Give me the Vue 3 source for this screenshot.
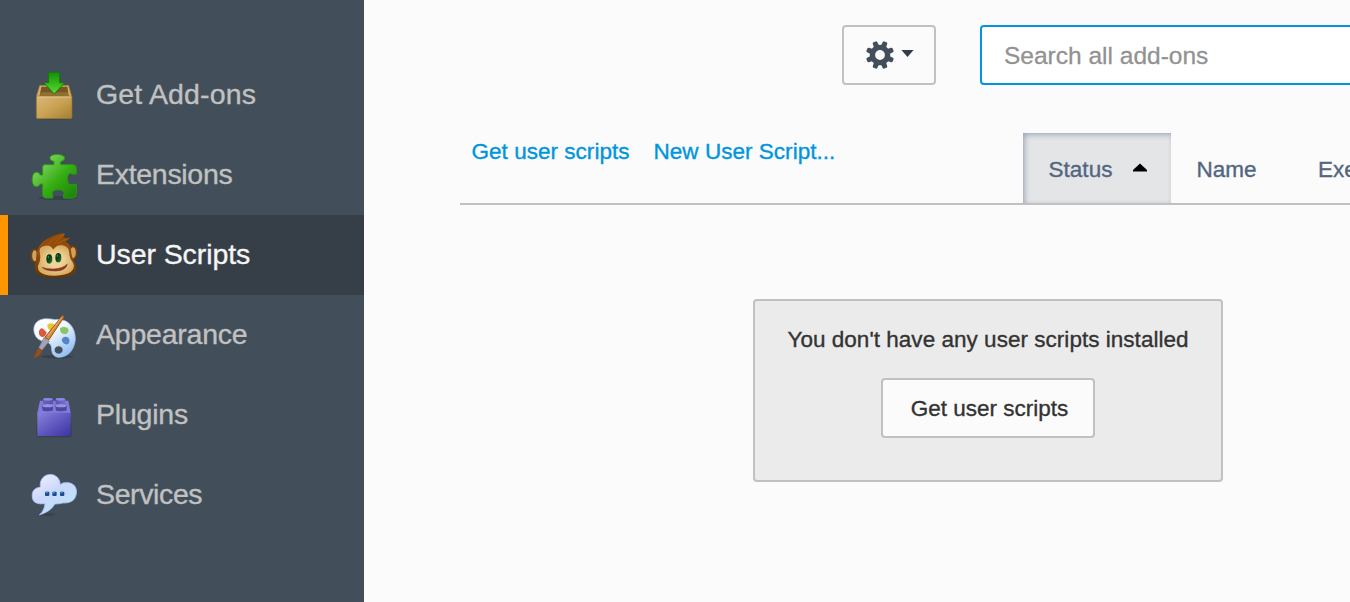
<script setup>
const items = [
  { id: 'get', label: 'Get Add-ons' },
  { id: 'extensions', label: 'Extensions' },
  { id: 'scripts', label: 'User Scripts', active: true },
  { id: 'appearance', label: 'Appearance' },
  { id: 'plugins', label: 'Plugins' },
  { id: 'services', label: 'Services' },
]
const teeth = [22.5, 67.5, 112.5, 157.5, 202.5, 247.5, 292.5, 337.5]
</script>

<template>
  <div class="window">
    <nav class="sidebar">
      <div v-for="item in items" :key="item.id" class="category" :class="[item.id, { active: item.active }]">
        <svg v-if="item.id === 'get'" class="icon" viewBox="0 0 180 180">
          <defs>
            <linearGradient id="box" x1="0" y1="0" x2="1" y2="1"><stop offset="0" stop-color="#d9b877" /><stop offset=".5" stop-color="#c9a253" /><stop offset="1" stop-color="#a67d30" /></linearGradient>
            <linearGradient id="arrow" x1="0" y1="0" x2="0" y2="1"><stop offset="0" stop-color="#178f0b" /><stop offset=".55" stop-color="#36bd18" /><stop offset="1" stop-color="#6ed245" /></linearGradient>
          </defs>
          <ellipse cx="91" cy="160" rx="56" ry="5" fill="#242c32" opacity=".4" />
          <path d="M47 61H134L143 94H37Z" fill="#d4ae65" stroke="#94712f" stroke-width="2" />
          <path d="M52 65H130L134 92H47Z" fill="#755725" />
          <path d="M52 82H131L134 94H46Z" fill="#91702f" />
          <rect x="37" y="94" width="107" height="67" rx="4" fill="url(#box)" stroke="#92702f" stroke-width="2" />
          <path d="M39 96H142" stroke="#e6cd96" stroke-width="3" />
          <path d="M74 22H107V53H122L91 87L59 53H74Z" fill="url(#arrow)" stroke="#127c0a" stroke-width="3" stroke-linejoin="round" />
        </svg>

        <svg v-else-if="item.id === 'extensions'" class="icon" viewBox="0 0 180 180">
          <defs><linearGradient id="puzzle" x1="0" y1="0" x2="1" y2="1"><stop offset="0" stop-color="#a8df7d" /><stop offset=".28" stop-color="#6dc94d" /><stop offset=".58" stop-color="#35ad12" /><stop offset="1" stop-color="#198007" /></linearGradient></defs>
          <ellipse cx="100" cy="159" rx="57" ry="6" fill="#252e33" opacity=".4" />
          <path d="M62 59H90V49Q77 47 78 38C78 25 122 25 122 39Q122 47 110 50V59H146Q157 59 157 70V87H145C125 75 125 126 145 118H157V146Q156 158 146 159H119V149C130 129 75 129 86 150V159H65Q56 158 56 149V117H49Q45 126 35 125C21 122 21 85 35 82Q44 79 49 90H56V66Q56 60 62 59Z" fill="url(#puzzle)" stroke="#289d13" stroke-width="3" stroke-linejoin="round" />
        </svg>

        <svg v-else-if="item.id === 'scripts'" class="icon" viewBox="0 0 180 180">
          <defs>
            <linearGradient id="hair" x1="0" y1="0" x2="0" y2="1"><stop stop-color="#8f4908" /><stop offset=".45" stop-color="#974e0b" /><stop offset="1" stop-color="#623400" /></linearGradient>
            <radialGradient id="face"><stop offset=".4" stop-color="#efd497" /><stop offset="1" stop-color="#d7ae67" /></radialGradient>
            <linearGradient id="eye" x1="0" y1="0" x2="1" y2="1"><stop stop-color="#06200b" /><stop offset=".5" stop-color="#07461c" /><stop offset="1" stop-color="#3a7a3c" /></linearGradient>
          </defs>
          <ellipse cx="32" cy="92" rx="10" ry="19" fill="#d0a25d" stroke="#70400c" stroke-width="5" />
          <ellipse cx="147" cy="83" rx="11" ry="19" fill="#d0a25d" stroke="#70400c" stroke-width="5" />
          <path d="M36 109C35 63 53 46 89 32Q114 23 121 24L118 37Q130 41 137 39L125 51Q142 55 142 83C145 106 157 112 156 132C153 151 129 159 92 159C53 159 34 149 33 130Q32 119 36 109Z" fill="url(#hair)" />
          <path d="M47 81Q45 66 61 63Q78 57 88 74Q98 58 115 61Q138 65 136 90Q138 103 147 113Q155 130 140 141Q125 151 94 152Q61 153 48 141Q38 131 44 118Q52 103 47 81Z" fill="url(#face)" />
          <path d="M72 57Q97 33 122 28Q99 43 89 58M100 56Q117 45 137 39" fill="none" stroke="#bd6d18" stroke-width="3" opacity=".5" />
          <ellipse cx="76" cy="102" rx="9" ry="14" fill="url(#eye)" /><ellipse cx="103" cy="98" rx="9" ry="14" fill="url(#eye)" />
          <ellipse cx="73" cy="96" rx="2" ry="4" fill="#48815d" /><ellipse cx="100" cy="92" rx="2" ry="4" fill="#48815d" />
          <path d="M54 127Q66 133 90 132Q118 130 130 117Q127 137 95 138Q62 138 54 127Z" fill="#8a3a24" stroke="#7a2a1a" stroke-width="1.5" />
        </svg>

        <svg v-else-if="item.id === 'appearance'" class="icon" viewBox="0 0 180 180">
          <defs>
            <linearGradient id="palette" x1="0" y1="0" x2=".7" y2="1"><stop stop-color="#fff" /><stop offset=".45" stop-color="#f2f8ff" /><stop offset="1" stop-color="#91bdf5" /></linearGradient>
            <filter id="paint"><feGaussianBlur stdDeviation="1.6" /></filter>
          </defs>
          <ellipse cx="100" cy="155" rx="48" ry="6" fill="#252e35" opacity=".4" />
          <path fill-rule="evenodd" d="M31 85C25 61 37 43 64 41Q82 41 93 44C134 39 154 68 154 103C151 137 130 158 102 157Q85 155 83 135Q84 113 64 110Q39 108 31 85ZM91 135A13 12 0 1 0 117 135A13 12 0 1 0 91 135Z" fill="url(#palette)" stroke="#a8caef" stroke-width="2" />
          <g filter="url(#paint)">
            <path d="M45 78Q50 65 58 72L68 82Q65 98 53 96Q43 92 45 78Z" fill="#dc5a3a" />
            <path d="M70 59Q79 51 90 57Q99 71 84 77Q69 74 70 59Z" fill="#eac726" />
            <path d="M108 70L118 65L130 68Q138 77 128 86Q115 90 109 80Z" fill="#85c765" />
            <path d="M113 105Q118 92 131 97Q141 104 133 117Q119 122 113 105Z" fill="#5285c8" />
          </g>
          <path d="M116 31L120 36L75 104L62 98Z" fill="#d78a39" stroke="#97551d" stroke-width="3" />
          <path d="M113 37L73 92" stroke="#f4b36b" stroke-width="3" />
          <path d="M60 98L76 108L54 136L44 129Z" fill="#a8a1b2" stroke="#77798d" stroke-width="2" />
          <path d="M44 129L55 137Q48 157 25 160Q34 153 36 142Q38 133 44 129Z" fill="#91511e" stroke="#6f3f1b" stroke-width="1" />
        </svg>

        <svg v-else-if="item.id === 'plugins'" class="icon" viewBox="0 0 180 180">
          <defs>
            <linearGradient id="brick" x1="0" y1="0" x2="1" y2="1"><stop stop-color="#8882db" /><stop offset=".55" stop-color="#5d55bd" /><stop offset="1" stop-color="#3e32a0" /></linearGradient>
            <linearGradient id="stud"><stop stop-color="#6864b2" /><stop offset=".5" stop-color="#5750a7" /><stop offset="1" stop-color="#7770cc" /></linearGradient>
          </defs>
          <path d="M37 115H143V151Q142 158 130 157H47Q36 156 37 145Z" fill="#252d35" opacity=".4" />
          <path d="M48 47H133L140 84H40Z" fill="#817be0" />
          <path d="M57 42Q57 39 72 39Q87 39 87 43V57H57ZM95 43Q95 39 109 39Q124 39 124 43V57H95Z" fill="url(#stud)" />
          <ellipse cx="72" cy="43" rx="14" ry="4" fill="#8d87e5" /><ellipse cx="109" cy="43" rx="14" ry="4" fill="#8d87e5" />
          <path d="M54 63Q55 57 70 57Q87 57 87 63V76Q79 81 56 77ZM94 63Q95 57 111 57Q128 57 128 63V76Q119 81 96 77Z" fill="#504798" />
          <ellipse cx="71" cy="62" rx="16" ry="5" fill="#9691ed" /><ellipse cx="111" cy="62" rx="16" ry="5" fill="#9691ed" />
          <rect x="40" y="83" width="100" height="70" rx="2" fill="url(#brick)" />
        </svg>

        <svg v-else class="icon" viewBox="0 0 180 180">
          <defs>
            <linearGradient id="cloud" x1="0" y1="0" x2=".65" y2="1"><stop stop-color="#f4f3ff" /><stop offset=".5" stop-color="#cbd7fb" /><stop offset="1" stop-color="#b9e6f8" /></linearGradient>
          </defs>
          <ellipse cx="68" cy="149" rx="25" ry="5" fill="#252d34" opacity=".35" />
          <path d="M49 66C43 20 106 14 109 59Q115 51 133 53C156 55 165 80 151 102Q141 115 116 114Q107 117 93 117Q80 140 46 150Q61 137 63 116Q28 120 25 99Q20 70 49 66Z" fill="url(#cloud)" stroke="#a9bcf5" stroke-width="2.5" />
          <g fill="#164c90"><rect x="63" y="80" width="13" height="13" rx="3" /><rect x="85" y="80" width="13" height="13" rx="3" /><rect x="108" y="80" width="13" height="13" rx="3" /></g>
          <g fill="#4d94cb"><rect x="65" y="80" width="6" height="5" /><rect x="87" y="80" width="6" height="5" /><rect x="110" y="80" width="6" height="5" /></g>
        </svg>
        <span>{{ item.label }}</span>
      </div>
    </nav>

    <main class="content">
      <header class="toolbar">
        <button class="tools" aria-label="Tools">
          <svg class="gear" viewBox="-15 -15 30 30">
            <path v-for="angle in teeth" :key="angle" :transform="`rotate(${angle})`" d="M-2.8-8L-2.4-13Q-2.2-14.2-1.2-14.2H1.2Q2.2-14.2 2.4-13L2.8-8Z" fill="#424f5a" />
            <circle r="7.6" fill="none" stroke="#424f5a" stroke-width="5.4" />
          </svg>
          <svg class="down" viewBox="0 0 14 8"><path d="M0 0H14L7 8Z" fill="#333b4c" /></svg>
        </button>
        <input class="search" type="text" placeholder="Search all add-ons">
      </header>
      <div class="subbar">
        <a class="get-link">Get user scripts</a>
        <a class="new-link">New User Script...</a>
        <div class="status"><span>Status</span><svg viewBox="0 0 16 9"><path d="M1 8.5V7L8 .5L15 7V8.5Z" fill="#000" /></svg></div>
        <div class="name">Name</div>
        <div class="execution">Execution Order</div>
      </div>
      <section class="empty">
        <p>You don't have any user scripts installed</p>
        <button class="install"><span>Get user scripts</span></button>
      </section>
    </main>
  </div>
</template>

<style>
body { margin: 0; overflow: hidden; }
</style>
<style scoped>
* { box-sizing: border-box; }
.window { display: flex; width: 1350px; height: 602px; overflow: hidden; background: #fbfbfb; font-family: "Liberation Sans", Arial, sans-serif; }
.sidebar { flex: 0 0 364px; padding-top: 55px; background: #424f5a; }
.category { display: flex; align-items: center; height: 80px; border-left: 8px solid transparent; padding-left: 16px; color: #c1c1c1; font-size: 28.5px; letter-spacing: -.22px; }
.category.active { background: #363f48; border-color: #ff9500; color: #f5f5f5; }
.category.get { letter-spacing: .15px; }
.category.extensions { letter-spacing: -.3px; }
.category.scripts { letter-spacing: -.08px; }
.category.services { letter-spacing: -.38px; }
.category span { margin: -2px 0 0 12px; line-height: 34px; white-space: nowrap; -webkit-text-stroke: .35px; }
.icon { flex: none; width: 60px; height: 60px; margin-top: -1px; filter: blur(.5px); }
.content { flex: none; width: 986px; overflow: hidden; }
.toolbar { display: flex; height: 133px; padding: 25px 0 0 478px; }
button { display: flex; align-items: center; justify-content: center; border: 2px solid #c1c1c1; border-radius: 4px; background: #fbfbfb; font-family: inherit; padding: 0; }
.tools { flex: none; width: 94px; height: 60px; }
.gear { width: 30px; height: 30px; }
.down { width: 13px; height: 7px; margin: -3px 0 0 6px; }
.search { flex: none; width: 440px; height: 60px; margin-left: 44px; padding: 2px 22px 0; border: 2px solid #0095dd; border-radius: 4px; background: #fff; font: 24.5px "Liberation Sans", Arial, sans-serif; }
.search::placeholder { color: #929292; opacity: 1; -webkit-text-stroke: .3px; }
.subbar { display: flex; width: 1100px; height: 72px; margin-left: 96px; border-bottom: 2px solid #c1c1c1; font-size: 22.5px; line-height: 37px; letter-spacing: .03px; white-space: nowrap; -webkit-text-stroke: .35px; }
.get-link { flex: none; width: 182px; margin-left: 11.5px; color: #0095dd; }
.new-link { flex: none; width: 369.5px; color: #0095dd; }
.status { display: flex; align-items: center; flex: none; width: 148px; height: 70px; padding-left: 25.5px; background: #e4e5e7; box-shadow: inset 2px 2px 6px -1px #8e9cb2; color: #536680; }
.status span { padding-top: 2px; }
.status svg { width: 16px; height: 9px; margin: -1px 0 0 20px; }
.name, .execution { flex: none; line-height: 73px; color: #536680; }
.name { width: 121px; padding-left: 25.5px; }
.execution { padding-left: 26px; }
.empty { display: flex; flex-direction: column; align-items: center; width: 470px; height: 183px; margin: 94px 0 0 389px; border: 2px solid #c1c1c1; border-radius: 4px; background: #ebebeb; color: #333; font-size: 22.5px; letter-spacing: .03px; }
.empty p { margin: 24px 0 23px; line-height: 30px; white-space: nowrap; -webkit-text-stroke: .35px; }
.install { width: 214px; height: 60px; color: #333; font-size: 22.5px; -webkit-text-stroke: .35px; }
.install span { padding: 1px 0 0 3px; }
</style>
